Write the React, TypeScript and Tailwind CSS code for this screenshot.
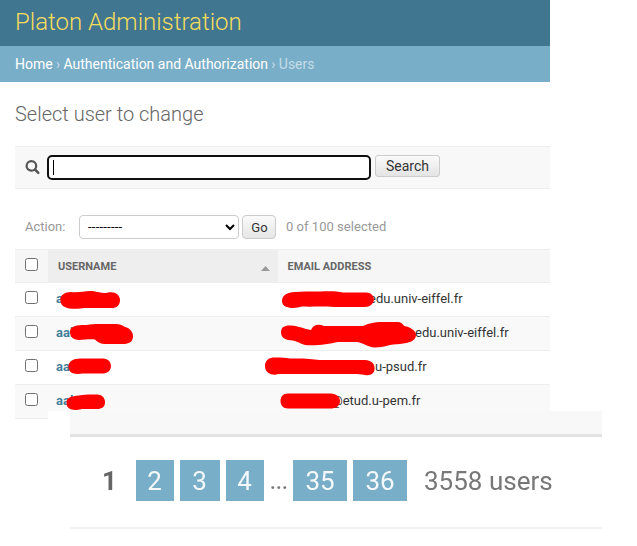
import React from "react";

const rows = [
  { user: "a", email: "edu.univ-eiffel.fr", pad: "pl-[91px]" },
  { user: "aal", email: "edu.univ-eiffel.fr", pad: "pl-[137px]" },
  { user: "aal", email: "u-psud.fr", pad: "pl-[97px]" },
  { user: "aal", email: "@etud.u-pem.fr", pad: "pl-[53px]" },
];

const marks = [
  "M60.500 300C60 295 65 292 71 292C80 293 84 290.500 93 291C99 292 103 294 108 292.500C115 291 120 295 120 300C120 306 116 308.500 110 308H84C78 309 60 311 60.500 300Z",
  "M70 332C70 327 75 325.500 82 325C90 325 92 323.500 101 324H114C119 323.500 123 325 125 327C130 328 133 332 133 336C133 342 129 344 123 344H105C101 344 97 342 95 339.500C89 339 84 340 79 340C74 340 70 337 70 332Z",
  "M68.500 367C68 361 74 358 82 358.500H102C108 358 111 362 111 366C111 371 107 373.500 102 373.500H83C74 375 68.500 373 68.500 367Z",
  "M66.500 403C66 398 71 396 79 395.500C83 394.500 87 394.500 92 394.500H97C102 394.500 105 398 105 402C105 407 102 409 97 409H82C74 411 66.500 410 66.500 403Z",
  "M282 301C282 295 287 292.500 295 292C302 291 309 291.500 318 291.500C330 291 336 291 343 292.500H366C371 292.500 374 296 374 300C373 304 370 307 365 307H334C323 306 312 307 302 306.500C295 309 282 309 282 301Z",
  "M281 332C281 327 285 325 291 325.500C299 326 304 329 311 330C313 325 318 323.500 324 326H363C370 323 374 322 383 322H397C401 322 403 324 404 326C411 327 416 331 416 335C416 341 409 343 400 344C390 344 384 347.500 375 347.500C367 347 364 343 357 342H338C329 344 316 346 305 345C299 343 295 340 288 340C284 339 281 337 281 332Z",
  "M265 366C265 360 269 357.500 275 357.500C283 357 287 358.500 295 358.500C308 358 313 359.500 323 360H365C371 360 375 364 374.500 368C375 373 371 376 365 375C359 373.500 352 374 343 374H278C274 376 265 374 265 366Z",
  "M288 393.500H330C336 393 340 397 340 401C340 406 336 408.500 330 408.500H288C283 408.500 280.500 405 280.500 401C280.500 397 283 393.500 288 393.500Z",
];

function Box() {
  return (
    <input
      type="checkbox"
      className="block h-[13px] w-[13px] shrink-0 appearance-none rounded-[2.5px] border border-[#707070] bg-white"
    />
  );
}

function Page({ n, w }: { n: string; w: string }) {
  return (
    <a className={`flex h-[41px] shrink-0 items-center justify-center bg-[#79aec8] pt-[2px] text-[#f4f8fa] ${w}`}>{n}</a>
  );
}

export default function App() {
  return (
    <div className="relative h-[546px] w-[637px] overflow-hidden bg-white font-['Roboto','Liberation_Sans',sans-serif] text-[13px] text-[#333]">
      <div className="w-[550px]">
        <header className="flex h-[46px] items-center bg-[#417690] pb-[2px] pl-[15px] text-2xl font-light text-[#f5dd5d]">
          Platon Administration
        </header>
        <nav className="flex h-9 items-center gap-[3.3px] bg-[#79aec8] pl-[15px] text-sm text-[#c4dce8]">
          <a className="text-white">Home</a>
          <span>›</span>
          <a className="text-white">Authentication and Authorization</a>
          <span>›</span>
          <span>Users</span>
        </nav>
        <main className="pl-[15px]">
          <h1 className="flex h-16 items-center text-xl font-light text-[#666]">Select user to change</h1>
          <form className="flex h-[43px] items-start border-y border-[#eee] bg-[#f8f8f8] pl-[10px]">
            <svg className="mt-[12px] h-4 w-4 shrink-0" viewBox="0 0 16 16" fill="none" stroke="#555">
              <circle cx="6.400" cy="6.900" r="4.800" strokeWidth="2.200" />
              <path d="M10 10.500L13.300 13.800" strokeWidth="2.500" strokeLinecap="round" />
            </svg>
            <div className="mt-[8px] ml-[6px] flex h-[25px] w-[324px] items-center rounded-[5px] border-2 border-[#101010] bg-white pl-1">
              <span className="h-[15px] w-px bg-black" />
            </div>
            <button className="mt-[8px] ml-1 h-[22px] w-[65px] rounded-[3px] border border-[#ccc] bg-linear-to-b from-[#fafafa] to-[#e4e4e4] text-sm leading-5 text-[#333]">
              Search
            </button>
          </form>
          <div className="flex h-[60px] items-end pb-[10px] pl-[10px] text-[#999]">
            <span className="w-[54px] pb-[3px]">Action:</span>
            <div className="flex h-6 w-[160px] items-center justify-between rounded-[4px] border border-[#ccc] bg-white pr-[3px] pl-2 text-black">
              <span className="tracking-[0.22px]">---------</span>
              <svg className="h-2 w-[10px]" viewBox="0 0 10 8" fill="none" stroke="#000" strokeWidth="2">
                <path d="M1 2L5 6L9 2" />
              </svg>
            </div>
            <button className="ml-[3px] h-6 w-[34px] rounded-[4px] border border-[#ccc] bg-linear-to-b from-[#fafafa] to-[#e6e6e6] pt-px pl-px text-[13px] text-[#333]">
              Go
            </button>
            <span className="pb-[3px] pl-[10px] tracking-[0.03px]">0 of 100 selected</span>
          </div>
          <div className="flex h-[34px] border-y border-[#eee] bg-[#f6f6f6] text-[11px] font-bold text-[#666]">
            <div className="w-[33px] pt-[8px] pl-[10px]">
              <Box />
            </div>
            <div className="flex w-[230px] items-center justify-between bg-[#eee] pt-[2px] pr-[8px] pl-[10px]">
              <span>USERNAME</span>
              <svg className="mt-[3px] h-[5px] w-[9px]" viewBox="0 0 9 5">
                <path d="M0 5L4.500 0L9 5Z" fill="#999" />
              </svg>
            </div>
            <div className="flex items-center pt-[2px] pl-[9.5px]">EMAIL ADDRESS</div>
          </div>
          {rows.map((r, i) => (
            <div key={i} className="flex h-[34px] border-b border-[#eee] odd:bg-white even:bg-[#f9f9f9]">
              <div className="w-[41px] pt-[8px] pl-[10px]">
                <Box />
              </div>
              <div className="flex w-[222px] items-center pb-[2px] font-bold text-[#447e9b]">{r.user}</div>
              <div className={`flex items-center pb-[2px] ${r.pad}`}>{r.email}</div>
            </div>
          ))}
        </main>
      </div>
      <section className="relative -mt-[8px] ml-[48px] w-[589px] bg-white pl-[22px]">
        <div className="h-[26px] w-[532px] border-b-[3px] border-[#e2e2e2] bg-[#f8f8f8]" />
        <div className="flex h-[92px] w-[532px] items-center border-b-2 border-[#f2f2f2] pb-[3px] text-[26px] text-[#777] blur-[0.4px]">
          <span className="w-[65.5px] pt-px pl-[32px] font-bold text-[#666]">1</span>
          <div className="flex gap-[6px]">
            <Page n="2" w="w-[38px]" />
            <Page n="3" w="w-[40px]" />
            <Page n="4" w="w-[38px]" />
          </div>
          <span className="w-[29.5px] pl-[6px] tracking-[-0.8px]">...</span>
          <div className="flex gap-[6px]">
            <Page n="35" w="w-[54px]" />
            <Page n="36" w="w-[54px]" />
          </div>
          <span className="pt-px pl-[17px] whitespace-nowrap">3558 users</span>
        </div>
      </section>
      <svg className="absolute inset-0 h-[546px] w-[637px]" viewBox="0 0 637 546" fill="#f00">
        {marks.map((d) => (
          <path key={d} d={d} />
        ))}
      </svg>
    </div>
  );
}
